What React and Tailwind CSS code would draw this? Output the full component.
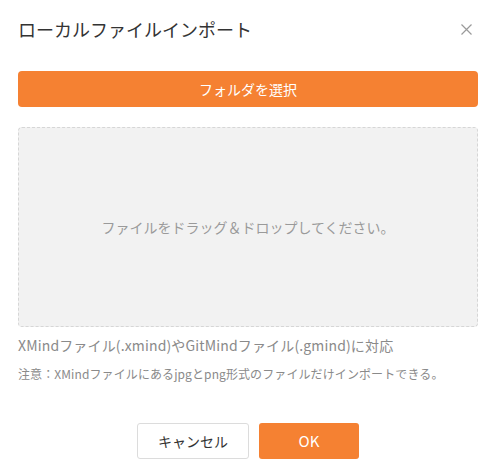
export default function App() {
  const font = { fontFamily: '"Noto Sans CJK JP", "Noto Sans", sans-serif' };
  return (
    <div className="w-[493px] h-[474px] bg-white overflow-hidden" style={font}>
      <div className="pl-[18px] pr-[15px]">
        <div className="flex items-center justify-between h-[24px] mt-[17px]">
          <div className="text-[18px] leading-[24px] text-[#333333]">ローカルファイルインポート</div>
          <svg width="11" height="11" viewBox="0 0 11 11" className="mr-[6px]">
            <path d="M0.5 0.5L10.5 10.5M10.5 0.5L0.5 10.5" stroke="#9a9a9a" strokeWidth="1.2" />
          </svg>
        </div>
        <div className="mt-[30px] h-[36px] rounded-[4px] bg-[#f58132] flex items-center justify-center text-white text-[14px]">
          フォルダを選択
        </div>
        <div className="mt-[20px] h-[200px] rounded-[4px] border border-dashed border-[#d6d6d6] bg-[#f2f2f2] flex items-center justify-center text-[14px] text-[#9a9a9a]">
          ファイルをドラッグ＆ドロップしてください。
        </div>
        <div className="mt-[7px] text-[14px] leading-[22px] text-[#8a8a8a] tracking-[0.15px]">
          XMindファイル(.xmind)やGitMindファイル(.gmind)に対応
        </div>
        <div className="mt-[8px] text-[12px] leading-[20px] text-[#8a8a8a] tracking-[0.1px]">
          注意：XMindファイルにあるjpgとpng形式のファイルだけインポートできる。
        </div>
        <div className="mt-[39px] flex justify-center gap-[10px]">
          <div className="w-[112px] h-[36px] rounded-[3px] border border-[#dcdcdc] bg-white flex items-center justify-center text-[14px] text-[#333333]">
            キャンセル
          </div>
          <div className="w-[100px] h-[36px] rounded-[3px] bg-[#f58132] flex items-center justify-center text-[15px] text-white">
            OK
          </div>
        </div>
      </div>
    </div>
  );
}
